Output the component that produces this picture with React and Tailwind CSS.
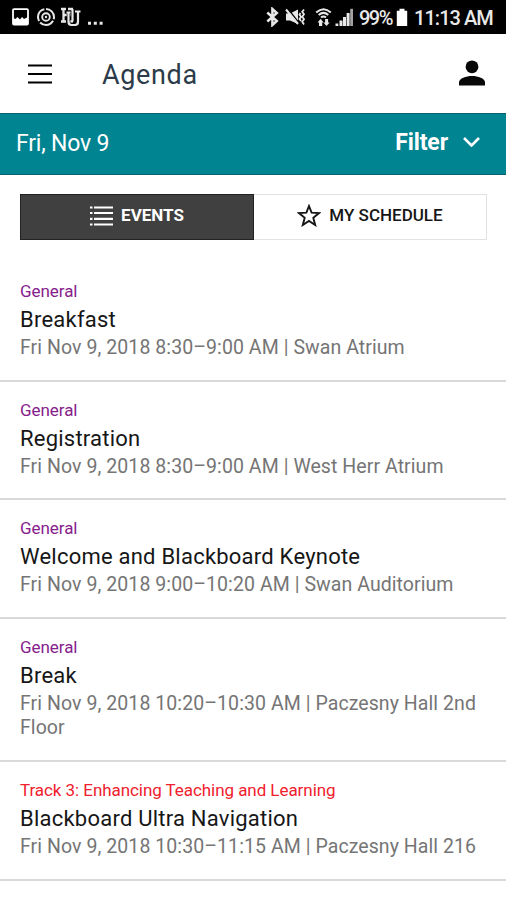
const events = [
  {
    track: "General",
    title: "Breakfast",
    details: "Fri Nov 9, 2018 8:30–9:00 AM | Swan Atrium",
    color: "text-[#86218c]",
    height: "h-[119px]",
  },
  {
    track: "General",
    title: "Registration",
    details: "Fri Nov 9, 2018 8:30–9:00 AM | West Herr Atrium",
    color: "text-[#86218c]",
    height: "h-[118px]",
  },
  {
    track: "General",
    title: "Welcome and Blackboard Keynote",
    details: "Fri Nov 9, 2018 9:00–10:20 AM | Swan Auditorium",
    color: "text-[#86218c]",
    height: "h-[119px]",
  },
  {
    track: "General",
    title: "Break",
    details: "Fri Nov 9, 2018 10:20–10:30 AM | Paczesny Hall 2nd Floor",
    color: "text-[#86218c]",
    height: "h-[143px]",
  },
  {
    track: "Track 3: Enhancing Teaching and Learning",
    title: "Blackboard Ultra Navigation",
    details: "Fri Nov 9, 2018 10:30–11:15 AM | Paczesny Hall 216",
    color: "text-[#f0202c]",
    height: "h-[119px]",
  },
];

function StatusBar() {
  return (
    <div className="flex h-[34px] items-center bg-black text-[#e8e8e8]">
      <svg className="ml-3 h-[18px] w-[17px]" viewBox="0 0 17 18">
        <rect x="1" y="1.2" width="15" height="15.4" rx="1" fill="none" stroke="white" strokeWidth="1.8" />
        <path d="M1 10l2.500 1 2-2 2.500 2.500 2-2.500 2 2 4-2v7.500H1z" fill="white" />
      </svg>
      <svg className="ml-[7px] h-[20px] w-[20px]" viewBox="0 0 20 20" fill="none" stroke="currentColor">
        <circle cx="10" cy="10" r="8" strokeWidth="2" strokeDasharray="15 1.755" strokeDashoffset="-4" />
        <circle cx="10" cy="10" r="3.800" strokeWidth="1.9" />
        <circle cx="10" cy="10" r="1.2" fill="currentColor" stroke="none" />
      </svg>
      <svg className="ml-[4px] h-[20px] w-[21px]" viewBox="0 0 21 20" fill="none">
        <path d="M1 2h5M1 14.500h5M3.500 2v12.500M3.500 8h7M8 2h5M8 14.500h5" stroke="currentColor" strokeWidth="2.3" />
        <path d="M8.500 6v11.500h9.500V6" stroke="black" strokeWidth="3.600" />
        <path d="M6.500 5.500h4M8.500 5.500v9q0 3.500 3 3.500h3.500q3 0 3-3.500V4.500M15 4.500h5.500" stroke="currentColor" strokeWidth="2.200" />
        <path d="M12.500 2v12.500" stroke="currentColor" strokeWidth="2.200" />
      </svg>
      <svg className="ml-[7px] h-[20px] w-[15px]" viewBox="0 0 15 20" fill="currentColor">
        <path d="M0 14.800h3v3H0zM5.800 14.800h3v3h-3zM11.600 14.800h3v3h-3z" />
      </svg>

      <div className="mr-[13px] ml-auto flex items-center">
        <svg className="h-[20px] w-[13px]" viewBox="0 0 13 20" fill="none" stroke="currentColor" strokeWidth="2.5">
          <path d="M1.300 5.500l9.500 8.500-4.400 4V2l4.400 4-9.500 8.500" />
        </svg>
        <svg className="ml-[6px] h-[20px] w-[21px]" viewBox="0 0 21 20">
          <path d="M1 6.500h4l8-4v14.500l-8-3.500H1z" fill="currentColor" />
          <path d="M3 2l11 14" stroke="black" strokeWidth="1.500" />
          <path d="M1 2.500l12 14.500" stroke="currentColor" strokeWidth="2" />
          <path d="M15.500 6l-1 1.700 1.500 2-1.500 2.200 1.500 2.100M19 2.500l-1.800 2.300 1.800 2.500-1.800 2.500 1.800 2.500-1.800 2.500 1.800 2.700" fill="none" stroke="currentColor" strokeWidth="1.800" />
        </svg>
        <svg className="ml-[9px] h-[20px] w-[17px]" viewBox="0 0 17 20" fill="none" stroke="currentColor">
          <path d="M1.200 5.600q7.300-6.800 14.600 0M3.700 8q4.800-4.200 9.600 0M6 10.500q2.500-2 5 0" strokeWidth="2" />
          <path d="M2.500 15.500l3.200-3.800 2.800 3.800H7.200V19H4v-3.500zM8.500 15.500l3 3.500 3.200-3.500h-1.600V12h-3v3.500z" fill="currentColor" stroke="none" />
        </svg>
        <svg className="ml-[3px] h-[19px] w-[19px]" viewBox="0 0 19 19" fill="currentColor">
          <path d="M0.500 15.500h2.800V18H.5zM4.500 12.500h3V18h-3zM8 9h3v9H8zM11.600 5h3v13h-3z" />
          <path d="M15.200 0.800H18V18h-2.800z" opacity=".7" />
        </svg>
        <span className="mt-[1px] ml-[5px] w-[34px] text-[20px] leading-none font-medium tracking-[-1.5px]">99%</span>
        <svg className="ml-[3px] h-[19px] w-[12px]" viewBox="0 0 12 19" fill="white">
          <path d="M3.500 0.800h5v2h2.700V18H.8V2.800h2.700z" />
        </svg>
        <span className="mt-[1px] ml-[6px] w-[79px] text-[20px] leading-none font-medium tracking-[-0.95px] whitespace-nowrap">11:13 AM</span>
      </div>
    </div>
  );
}

function Header() {
  return (
    <header className="flex h-[79px] items-center bg-white pr-[21px] pl-[28px]">
      <svg className="h-[22px] w-[24px]" viewBox="0 0 24 22" stroke="black" strokeWidth="2.2">
        <path d="M0 2.500h24M0 11h24M0 19.500h24" />
      </svg>
      <h1 className="mt-[3px] ml-[50px] text-[27px] leading-none tracking-[0.65px] text-[#2c3b49]">Agenda</h1>
      <svg className="-mt-[1px] ml-auto h-[26px] w-[26px]" viewBox="0 0 26 26" fill="#080808">
        <circle cx="13" cy="6.800" r="6.400" />
        <path d="M0 25.500v-3.200C0 18.300 7 16 13 16s13 2.300 13 6.300v3.200z" />
      </svg>
    </header>
  );
}

export default function App() {
  return (
    <div className="h-[900px] w-[506px] overflow-hidden bg-white font-[Roboto,sans-serif]">
      <StatusBar />
      <Header />

      <div className="flex h-[62px] items-center justify-between border-y border-[#08616d] bg-[#008491] pr-[26px] pb-[2px] pl-4 text-white">
        <span className="text-[23px] leading-none tracking-[-0.2px]">Fri, Nov 9</span>
        <button className="-mt-[2px] flex items-center gap-[15px] text-[23px] leading-none font-bold tracking-[-0.1px]">
          Filter
          <svg className="h-[10px] w-[17px]" viewBox="0 0 17 10" fill="none" stroke="white" strokeWidth="2.600">
            <path d="M1 1l7.500 7.500L16 1" />
          </svg>
        </button>
      </div>

      <div className="mx-[20px] mt-[19px] flex h-[46px] w-[467px] text-[17px] font-bold">
        <button className="flex w-[234px] items-center justify-center gap-[8px] border border-[#222] bg-[#404040] pb-[2px] text-white">
          <svg className="h-[20px] w-[23px]" viewBox="0 0 23 20" stroke="currentColor" strokeWidth="2.200">
            <path d="M0 1.500h2.500M0 7h2.500M0 12.800h2.500M0 18.500h2.500M4 1.500h19M4 7h19M4 12.800h19M4 18.500h19" />
          </svg>
          EVENTS
        </button>
        <button className="flex w-[233px] items-center justify-center gap-[8px] border border-l-0 border-[#e2e2e2] pb-[2px] font-medium text-[#161616]">
          <svg className="-mt-[2px] h-[23px] w-[24px]" viewBox="0 0 24 23" fill="none" stroke="currentColor" strokeWidth="1.900">
            <path d="M12 2l2.600 6.700 7.400.4-5.700 4.700 1.900 7.200-6.200-4-6.200 4 1.900-7.200L2 9.100l7.400-.4z" />
          </svg>
          MY SCHEDULE
        </button>
      </div>

      <ul className="mt-[23px]">
        {events.map((event) => (
          <li key={event.title} className={`${event.height} border-b-2 border-[#d9d9d9] px-[20px] pt-[17px]`}>
            <p className={`text-[17px] leading-[22px] tracking-[-0.06px] ${event.color}`}>{event.track}</p>
            <h2 className="mt-[4px] text-[22px] leading-[28px] tracking-[0.23px] text-[#161616]">{event.title}</h2>
            <p className="mt-[2px] text-[19.5px] leading-[24px] tracking-[0.07px] text-[#757575]">{event.details}</p>
          </li>
        ))}
      </ul>
    </div>
  );
}
